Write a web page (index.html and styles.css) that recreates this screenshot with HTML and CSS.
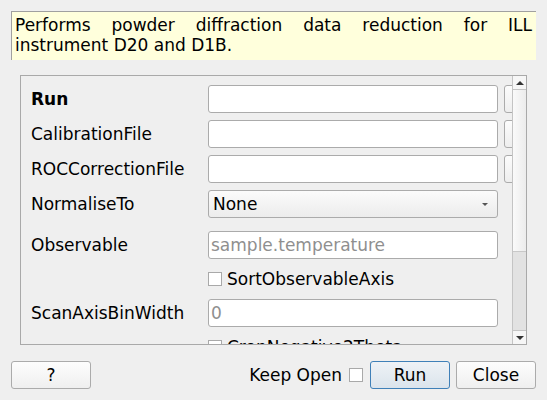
FILE: index.html
```html
<!DOCTYPE html>
<html>
<head>
<meta charset="utf-8">
<link rel="stylesheet" href="styles.css">
</head>
<body>
<div class="dialog">
  <div class="desc">Performs powder diffraction data reduction for ILL instrument D20 and D1B.</div>
  <div class="frame">
    <div class="viewport">
      <div class="form">
        <div class="label bold">Run</div>
        <div class="field"></div>
        <div class="browse"></div>

        <div class="label">CalibrationFile</div>
        <div class="field"></div>
        <div class="browse"></div>

        <div class="label">ROCCorrectionFile</div>
        <div class="field"></div>
        <div class="browse"></div>

        <div class="label">NormaliseTo</div>
        <div class="combo"><span>None</span><span class="arrow"></span></div>
        <div></div>

        <div class="label extra">Observable</div>
        <div class="field placeholder extra">sample.temperature</div>
        <div class="extra"></div>

        <div></div>
        <div class="check"><span class="box"></span><span>SortObservableAxis</span></div>
        <div></div>

        <div class="label">ScanAxisBinWidth</div>
        <div class="field placeholder">0</div>
        <div></div>

        <div></div>
        <div class="check"><span class="box"></span><span>CropNegative2Theta</span></div>
        <div></div>
      </div>
    </div>
    <div class="scrollbar">
      <div class="sb-btn"><span class="up"></span></div>
      <div class="sb-handle"></div>
      <div class="sb-trough"></div>
      <div class="sb-btn sb-down"><span class="down"></span></div>
    </div>
  </div>
  <div class="buttons">
    <div class="btn">?</div>
    <div class="spacer"></div>
    <div class="keep">Keep Open</div>
    <span class="box keepbox"></span>
    <div class="btn default">Run</div>
    <div class="btn">Close</div>
  </div>
</div>
</body>
</html>
```

FILE: styles.css
```css
html, body {
  margin: 0;
  padding: 0;
  background: #efefef;
}
body {
  width: 547px;
  height: 400px;
  overflow: hidden;
  font-family: "DejaVu Sans", "Liberation Sans", sans-serif;
  font-size: 17px;
  color: #000;
}
.dialog {
  padding: 11px;
  display: flex;
  flex-direction: column;
}
.desc {
  background: #ffffdc;
  border-top: 1px solid #a0a0a0;
  border-left: 1px solid #a0a0a0;
  padding: 3px 4px 5px 3px;
  line-height: 20px;
  text-align: justify;
}
.frame {
  margin: 15px 9px 0 9px;
  height: 268px;
  border: 1px solid #a9a9a9;
  display: flex;
}
.viewport {
  flex: 1;
  overflow: hidden;
  position: relative;
}
.form {
  padding: 9px 0 0 10px;
  display: grid;
  grid-template-columns: 171px 290px 80px;
  column-gap: 6px;
  row-gap: 7px;
  align-items: center;
}
.label {
  line-height: 28px;
  white-space: nowrap;
}
.bold { font-weight: bold; }
.extra { margin-top: 6px; }
.field {
  height: 26px;
  box-sizing: content-box;
  border: 1px solid #ababab;
  border-radius: 3px;
  background: #fff;
  line-height: 26px;
  padding-left: 2px;
  width: 286px;
  white-space: nowrap;
}
.placeholder { color: #8f8f8f; }
.browse {
  height: 26px;
  border: 1px solid #ababab;
  border-radius: 3px;
  background: linear-gradient(#fcfcfc, #eeeeee);
}
.combo {
  height: 26px;
  border: 1px solid #ababab;
  border-radius: 3px;
  background: linear-gradient(#fbfbfb, #ececec);
  display: flex;
  align-items: center;
  justify-content: space-between;
  padding: 0 9px 0 4px;
}
.arrow {
  width: 0;
  height: 0;
  border-left: 3px solid transparent;
  border-right: 3px solid transparent;
  border-top: 3px solid #555;
}
.check {
  height: 26px;
  display: flex;
  align-items: center;
  gap: 5px;
  white-space: nowrap;
}
.box {
  display: inline-block;
  width: 12px;
  height: 12px;
  border: 1px solid #a9a9a9;
  background: #fff;
  flex: none;
}
.scrollbar {
  width: 13px;
  border-left: 1px solid #c4c4c4;
  display: flex;
  flex-direction: column;
}
.sb-btn {
  height: 13px;
  border-bottom: 1px solid #c4c4c4;
  background: #f6f6f6;
  display: flex;
  align-items: center;
  justify-content: center;
}
.sb-down {
  border-bottom: none;
  border-top: 1px solid #c4c4c4;
}
.up {
  width: 0; height: 0;
  border-left: 4px solid transparent;
  border-right: 4px solid transparent;
  border-bottom: 4px solid #333;
}
.down {
  width: 0; height: 0;
  border-left: 4px solid transparent;
  border-right: 4px solid transparent;
  border-top: 4px solid #333;
}
.sb-handle {
  height: 161px;
  border-bottom: 1px solid #c8c8c8;
  background: linear-gradient(to right, #fafafa, #ececec);
}
.sb-trough {
  flex: 1;
  background: #e2e2e2;
}
.buttons {
  margin-top: 16px;
  display: flex;
  align-items: center;
  height: 28px;
}
.btn {
  width: 78px;
  height: 26px;
  border: 1px solid #ababab;
  border-radius: 3px;
  background: linear-gradient(#fdfdfd, #efefef);
  display: flex;
  align-items: center;
  justify-content: center;
}
.btn.default {
  border-color: #3f80b8;
  background: linear-gradient(#eef2f6, #dbe4ec);
  margin-right: 6px;
}
.spacer { flex: 1; }
.keep { margin-right: 7px; }
.keepbox { margin-right: 7px; }
```
